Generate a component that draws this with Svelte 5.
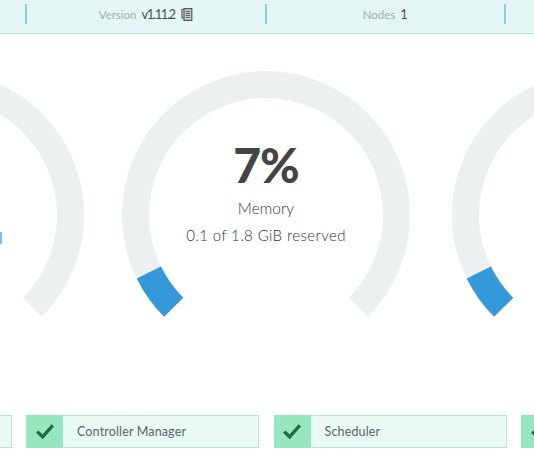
<script>
	const gauges = [
		{ pct: 7, label: 'CPU', detail: '0.1 of 1 reserved', more: true },
		{ pct: 7, label: 'Memory', detail: '0.1 of 1.8 GiB reserved' },
		{ pct: 7, label: 'Pods', detail: '8 of 110 used' }
	];
	const health = ['Etcd', 'Controller Manager', 'Scheduler', 'Nodes'];
</script>

<div class="page">
	<div class="info">
		<div class="cell">
			<span class="key">Version</span>
			<span class="val ver">v1.11.2</span>
			<svg class="copy" viewBox="0 0 12 13" width="12" height="13" aria-hidden="true">
				<path d="M2.5 1.5H1v8.5h1.5" fill="none" stroke="#555" stroke-width="1.2" />
				<path d="M3 .6h7.8v11.8H3z" fill="#cfd8d9" stroke="#555" stroke-width="1.2" />
				<path d="M4.6 3.4h4.6M4.6 5.4h4.6M4.6 7.4h4.6M4.6 9.4h4.6" stroke="#555" stroke-width="1" />
			</svg>
		</div>
		<div class="cell">
			<span class="key">Nodes</span>
			<span class="val">1</span>
		</div>
		<div class="cell"></div>
	</div>

	<div class="gauges">
		{#each gauges as g}
			<div class="gauge">
				<svg viewBox="0 0 288 288" width="288" height="288" aria-hidden="true">
					<path class="track" pathLength="100" d="M51.7 236.3A130.5 130.5 0 1 1 236.3 236.3" />
					<path class="fill" pathLength="100" stroke-dasharray="{g.pct} 100" d="M51.7 236.3A130.5 130.5 0 1 1 236.3 236.3" />
				</svg>
				<div class="readout">
					<div class="pct">{g.pct}%</div>
					<div class="label">{g.label}</div>
					<div class="detail">{g.detail}</div>
				</div>
				{#if g.more}<span class="more"></span>{/if}
			</div>
		{/each}
	</div>

	<div class="health">
		{#each health as name}
			<div class="box">
				<span class="ok">
					<svg viewBox="0 0 18 15" width="18" height="15" aria-hidden="true">
						<path d="M1.2 7.6 6.6 12.8 16.8 1.4" fill="none" stroke="#1d6b47" stroke-width="3.4" />
					</svg>
				</span>
				<span class="name">{name}</span>
			</div>
		{/each}
	</div>
</div>

<style>
	:global(body) {
		background: #fff;
	}
	.page {
		width: 534px;
		height: 462px;
		overflow: hidden;
		font-family: Lato, "Open Sans", sans-serif;
		color: #333;
	}

	.info {
		display: flex;
		height: 33px;
		padding-left: 25px;
		background: #e4f5f6;
		border-bottom: 1px solid #b5e2dd;
	}
	.cell {
		flex: 0 0 239.5px;
		box-sizing: border-box;
		height: 20px;
		margin-top: 4px;
		display: flex;
		align-items: center;
		justify-content: center;
		gap: 5px;
		border-left: 2px solid #8fd0cf;
		font-size: 11.5px;
	}
	.key {
		color: #a3adb0;
	}
	.val {
		color: #4a4f52;
		font-size: 13px;
	}
	.ver {
		letter-spacing: -1.4px;
	}
	.copy {
		margin-left: 1px;
	}

	.gauges {
		display: flex;
		gap: 42px;
		margin: 37px 0 0 -204px;
	}
	.gauge {
		flex: 0 0 288px;
		height: 288px;
		position: relative;
	}
	.gauge:first-child {
		margin-right: -4px;
	}
	.track, .fill {
		fill: none;
		stroke-width: 27;
	}
	.track {
		stroke: #ecf0f1;
	}
	.fill {
		stroke: #3498db;
	}
	.readout {
		position: absolute;
		inset: 0;
		text-align: center;
		white-space: nowrap;
	}
	.pct {
		margin-top: 64px;
		font-size: 48px;
		line-height: 60px;
		font-weight: 900;
		letter-spacing: -1px;
		color: #444;
	}
	.label {
		margin-top: 3px;
		font-size: 15.5px;
		line-height: 20px;
		font-weight: 300;
	}
	.detail {
		margin-top: 7px;
		font-size: 15px;
		line-height: 20px;
		font-weight: 300;
		letter-spacing: .4px;
	}
	.more {
		position: absolute;
		right: 82.5px;
		top: 161px;
		width: 1.5px;
		height: 12px;
		background: #7cbce8;
	}

	.health {
		display: flex;
		gap: 14.5px;
		margin: 56px 0 0 -221.5px;
	}
	.box {
		flex: 0 0 233px;
		box-sizing: border-box;
		height: 33px;
		display: flex;
		align-items: center;
		background: #eafbf4;
		border: 1px solid #b5e6d6;
		border-left: 0;
	}
	.ok {
		flex: 0 0 37px;
		align-self: stretch;
		display: flex;
		align-items: center;
		justify-content: center;
		background: #97e6bf;
		margin: -1px 0;
	}
	.name {
		margin-left: 14px;
		font-size: 12.5px;
		letter-spacing: .15px;
		color: #54666a;
	}
</style>
